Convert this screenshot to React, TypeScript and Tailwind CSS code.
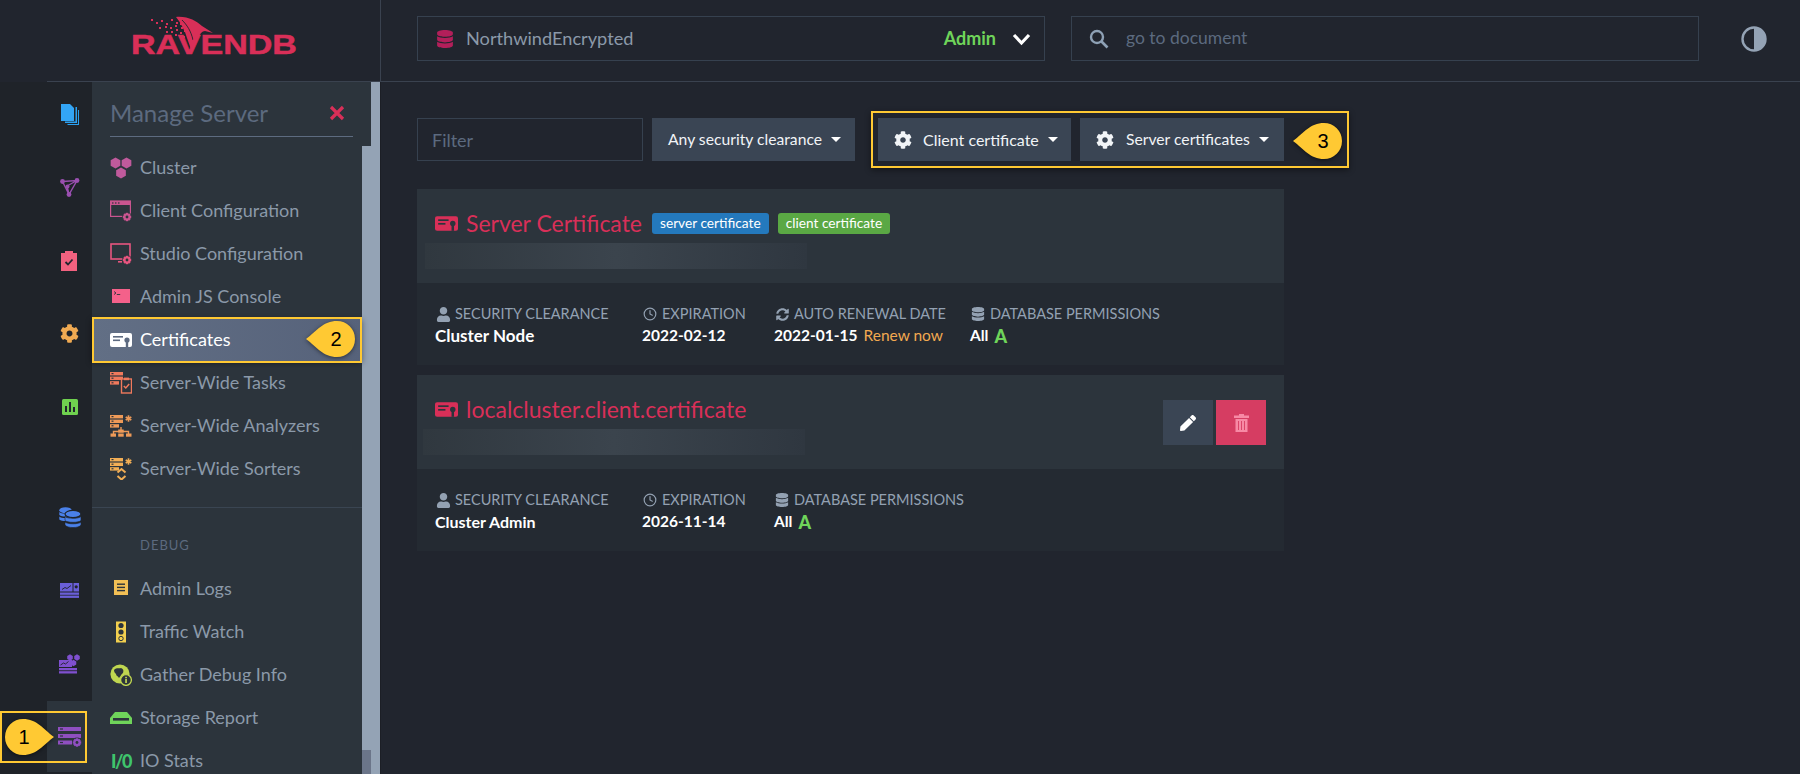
import type { ReactNode } from 'react';
import { FaCog, FaDatabase, FaPen, FaSyncAlt, FaUser } from 'react-icons/fa';
import { FiClock } from 'react-icons/fi';

function Hex({ x, y, r }: { x: number; y: number; r: number }) {
  const h = r * 0.866;
  return <polygon points={`${x},${y - r} ${x + h},${y - r / 2} ${x + h},${y + r / 2} ${x},${y + r} ${x - h},${y + r / 2} ${x - h},${y - r / 2}`} />;
}

function Gear({ x, y, r, bg = '#2c343c' }: { x: number; y: number; r: number; bg?: string }) {
  const teeth = [0, 45, 90, 135];
  return (
    <g>
      <circle cx={x} cy={y} r={r + 1.5} fill={bg} />
      {teeth.map((a) => (
        <rect key={a} x={x - 1.2} y={y - r - 0.8} width={2.4} height={2 * r + 1.6} transform={`rotate(${a} ${x} ${y})`} />
      ))}
      <circle cx={x} cy={y} r={r} />
      <circle cx={x} cy={y} r={r * 0.42} fill={bg} />
    </g>
  );
}

function Ico({ w = 22, h = 22, color, children }: { w?: number; h?: number; color: string; children: ReactNode }) {
  return (
    <svg width={w} height={h} viewBox={`0 0 ${w} ${h}`} fill={color} className="shrink-0">
      {children}
    </svg>
  );
}

function CertIcon({ color, hole = '#2c343c', w = 22, h = 16 }: { color: string; hole?: string; w?: number; h?: number }) {
  return (
    <svg width={w} height={h} viewBox="0 0 22 16" className="shrink-0">
      <rect x="0" y="1" width="22" height="14" rx="2" fill={color} />
      <rect x="3" y="4" width="10" height="1.6" fill={hole} />
      <rect x="3" y="7.5" width="7" height="1.6" fill={hole} />
      <circle cx="17" cy="8" r="2.6" fill={hole} />
      <rect x="15.8" y="10" width="2.4" height="5" fill={hole} />
    </svg>
  );
}

function ServerStack({ c, y = 0 }: { c: string; y?: number }) {
  return (
    <g fill={c}>
      <rect x="0" y={y} width="13" height="3.4" />
      <rect x="0" y={y + 4.6} width="13" height="3.4" />
      <rect x="0" y={y + 9.2} width="9" height="3.4" />
      <rect x="1.5" y={y + 1} width="2" height="1.2" fill="#2c343c" />
      <rect x="1.5" y={y + 5.6} width="2" height="1.2" fill="#2c343c" />
      <rect x="1.5" y={y + 10.2} width="2" height="1.2" fill="#2c343c" />
    </g>
  );
}

const Asterisk = ({ x, y, c }: { x: number; y: number; c: string }) => (
  <g stroke={c} strokeWidth="1.7">
    <line x1={x} y1={y - 3.2} x2={x} y2={y + 3.2} />
    <line x1={x - 2.8} y1={y - 1.6} x2={x + 2.8} y2={y + 1.6} />
    <line x1={x - 2.8} y1={y + 1.6} x2={x + 2.8} y2={y - 1.6} />
  </g>
);

const serverItems: { label: string; icon: ReactNode; active?: boolean }[] = [
  {
    label: 'Cluster',
    icon: (
      <Ico color="#c05a9c">
        <Hex x={5.5} y={6} r={5.6} />
        <Hex x={16.5} y={6} r={5.6} />
        <Hex x={11} y={16} r={5.6} />
      </Ico>
    ),
  },
  {
    label: 'Client Configuration',
    icon: (
      <Ico color="#c9558f">
        <rect x="0.6" y="1" width="19.8" height="15.4" fill="none" stroke="#c9558f" strokeWidth="1.2" />
        <rect x="0.6" y="1" width="19.8" height="4" />
        <rect x="2" y="2.4" width="1.5" height="1.2" fill="#2c343c" />
        <rect x="5" y="2.4" width="1.5" height="1.2" fill="#2c343c" />
        <rect x="8" y="2.4" width="1.5" height="1.2" fill="#2c343c" />
        <Gear x={17} y={17} r={3.4} />
      </Ico>
    ),
  },
  {
    label: 'Studio Configuration',
    icon: (
      <Ico color="#e8557f">
        <rect x="1" y="1" width="19" height="15" fill="none" stroke="#e8557f" strokeWidth="1.6" />
        <rect x="8" y="18" width="4" height="1.6" />
        <Gear x={17} y={17} r={3.4} />
      </Ico>
    ),
  },
  {
    label: 'Admin JS Console',
    icon: (
      <Ico color="#f4618a">
        <rect x="2" y="3" width="18" height="14" />
        <path d="M4 5.5l2 1.5-2 1.5" fill="none" stroke="#2c343c" strokeWidth="0.9" />
        <rect x="6.8" y="8" width="3.4" height="0.9" fill="#2c343c" />
      </Ico>
    ),
  },
  { label: 'Certificates', active: true, icon: <CertIcon color="#ffffff" hole="#5d6a80" /> },
  {
    label: 'Server-Wide Tasks',
    icon: (
      <Ico color="#f0795c">
        <ServerStack c="#f0795c" />
        <rect x="11.5" y="7" width="10" height="14" fill="#2c343c" stroke="#f0795c" strokeWidth="1.4" />
        <rect x="14" y="5.6" width="5" height="2.6" />
        <path d="M13.8 14l2 2 3.4-4" fill="none" stroke="#f0795c" strokeWidth="1.5" />
      </Ico>
    ),
  },
  {
    label: 'Server-Wide Analyzers',
    icon: (
      <Ico color="#ee9a58">
        <ServerStack c="#ee9a58" />
        <Asterisk x={18.5} y={3.5} c="#ee9a58" />
        <path d="M11 12v4M3.5 20v-3.5h15V20" fill="none" stroke="#ee9a58" strokeWidth="1.4" />
        <rect x="0.5" y="18.5" width="5.5" height="3.2" />
        <rect x="8.2" y="14.5" width="5.5" height="3.2" />
        <rect x="8.2" y="18.5" width="5.5" height="3.2" />
        <rect x="16" y="18.5" width="5.5" height="3.2" />
      </Ico>
    ),
  },
  {
    label: 'Server-Wide Sorters',
    icon: (
      <Ico color="#f2ae55">
        <ServerStack c="#f2ae55" />
        <Asterisk x={18.5} y={3.5} c="#f2ae55" />
        <path d="M7.5 14.5l4-3.5 4 3.5M7.5 18l4 3.5 4-3.5" fill="none" stroke="#f2ae55" strokeWidth="2" />
      </Ico>
    ),
  },
];

const debugItems: { label: string; icon: ReactNode }[] = [
  {
    label: 'Admin Logs',
    icon: (
      <Ico color="#f2bf55">
        <rect x="4" y="2" width="14" height="15" />
        <rect x="7" y="5.5" width="8" height="1.4" fill="#2c343c" />
        <rect x="7" y="8.7" width="8" height="1.4" fill="#2c343c" />
        <rect x="7" y="11.9" width="8" height="1.4" fill="#2c343c" />
      </Ico>
    ),
  },
  {
    label: 'Traffic Watch',
    icon: (
      <Ico color="#f2cf4f">
        <rect x="6" y="0.5" width="10" height="21" />
        <circle cx="11" cy="4.5" r="2.6" fill="#2c343c" />
        <circle cx="11" cy="11" r="2.6" fill="#2c343c" />
        <circle cx="11" cy="17.5" r="2.2" fill="none" stroke="#2c343c" strokeWidth="1" />
      </Ico>
    ),
  },
  {
    label: 'Gather Debug Info',
    icon: (
      <Ico color="#bfd650">
        <circle cx="10" cy="10" r="9.6" />
        <path d="M4 6c3-3 5-1 7-2 2 1 3 2 2 5-2 1-2 3-4 5-1-2-3-2-3-4-1-1-2-2-2-4z" fill="#2c343c" />
        <circle cx="16" cy="16" r="5.4" fill="#2c343c" stroke="#bfd650" strokeWidth="1.3" />
        <rect x="15.2" y="15" width="1.7" height="4" />
        <rect x="15.2" y="12.8" width="1.7" height="1.5" />
      </Ico>
    ),
  },
  {
    label: 'Storage Report',
    icon: (
      <Ico color="#6fd45a">
        <path d="M5 5h12l5 6v6H0v-6z" />
        <rect x="3" y="11" width="16" height="2.6" fill="#2c343c" />
      </Ico>
    ),
  },
  {
    label: 'IO Stats',
    icon: <span className="w-[22px] text-center text-[18px] font-black leading-none tracking-[-1.5px] text-[#3fc46c]">I/0</span>,
  },
];

function MenuRow({ label, icon, active }: { label: string; icon: ReactNode; active?: boolean }) {
  return (
    <div
      className={
        active
          ? 'relative flex h-[43px] items-center gap-[8px] bg-linear-to-r from-[#626f85] to-[#56627a] pl-[18px] text-white shadow-[0_2px_6px_rgba(0,0,0,0.45)]'
          : 'flex h-[43px] items-center gap-[8px] pl-[18px] text-[#8b99a9]'
      }
    >
      <span className="flex w-[22px] justify-center">{icon}</span>
      <span className="text-[18px]">{label}</span>
      {active && (
        <>
          <span className="absolute inset-x-0 -inset-y-[1.5px] border-2 border-[#ffc933]" />
          <Callout n={2} dir="left" className="right-[7px] top-[3px]" />
        </>
      )}
    </div>
  );
}

function Callout({ n, dir, className }: { n: number; dir: 'left' | 'right'; className: string }) {
  const d = dir === 'right' ? 'M49 18C38 26 32 36 18 36A18 18 0 0 1 18 0C32 0 38 10 49 18Z' : 'M0 18C11 10 17 0 31 0A18 18 0 0 1 31 36C17 36 11 26 0 18Z';
  return (
    <div className={`absolute h-[36px] w-[49px] ${className}`}>
      <svg width="49" height="36" viewBox="0 0 49 36" className="absolute inset-0 drop-shadow-[0_1px_2px_rgba(0,0,0,0.5)]">
        <path d={d} fill="#ffc933" />
      </svg>
      <span
        className={`absolute top-0 flex h-[36px] w-[36px] items-center justify-center font-[family-name:'Liberation_Sans',sans-serif] text-[20px] text-black ${dir === 'right' ? 'left-[1px]' : 'right-[1px]'}`}
      >
        {n}
      </span>
    </div>
  );
}

function Logo() {
  const dots = [
    [21, 3], [26, 6], [31, 4], [36, 7], [41, 3], [46, 6], [29, 11], [35, 10], [40, 11], [45, 9], [50, 7], [36, 15], [41, 15], [46, 13], [51, 11], [45, 18], [50, 16], [54, 14], [53, 20],
  ];
  return (
    <svg width="168" height="46" viewBox="0 0 168 46" aria-label="RavenDB">
      <g fill="#d92f58">
        {dots.map(([x, y]) => (
          <rect key={`${x}-${y}`} x={x} y={y} width="2" height="2" />
        ))}
        <path d="M46 1C58 0 66 5 72 10L83 17 75 15C72 15 70 18 68 22L62 36 57 22C55 15 51 7 46 1Z" />
        <path d="M52 4C57 9 61 15 63 24" fill="none" stroke="#21252e" strokeWidth="0.9" />
      </g>
      <text x="1" y="38" fontFamily="'Liberation Sans', sans-serif" fontWeight="700" fontSize="28" fill="#d92f58" stroke="#d92f58" strokeWidth="0.5" textLength="166" lengthAdjust="spacingAndGlyphs">
        RAVENDB
      </text>
    </svg>
  );
}

function Rail() {
  const top = [
    <Ico key="docs" color="#2ba0f0" w={18} h={21}>
      <path d="M14.5 3H16v16H4v-1.5h10.5zM17 6h1v15H6.5v-1H17z" />
      <path d="M0 0h9L13 4v13H0z" fill="#33a5f5" />
    </Ico>,
    <Ico key="graph" color="#9a4fb0" w={20} h={20}>
      <path d="M2.5 3.5L17 2.5 9 16.5zM7 8l2 8.5M7 8L17 2.5" fill="none" stroke="#9a4fb0" strokeWidth="1.4" />
      <circle cx="2.5" cy="3.5" r="2.4" />
      <circle cx="17" cy="2.5" r="2.4" />
      <circle cx="9" cy="16.5" r="2.4" />
      <circle cx="7.5" cy="8.5" r="2" />
    </Ico>,
    <Ico key="tasks" color="#f2617f" w={18} h={20}>
      <rect x="0" y="2" width="16" height="18" />
      <rect x="4" y="0" width="8" height="4" />
      <path d="M4.5 11l2.5 2.5 4.5-5" fill="none" stroke="#21252e" strokeWidth="1.8" />
    </Ico>,
    <FaCog key="gear" size={19} color="#f0aa52" />,
    <Ico key="chart" color="#6fd14f" w={16} h={16}>
      <rect x="0" y="0" width="16" height="16" rx="1.5" />
      <rect x="3" y="7" width="2" height="6" fill="#21252e" />
      <rect x="7" y="3" width="2" height="10" fill="#21252e" />
      <rect x="11" y="8" width="2" height="5" fill="#21252e" />
    </Ico>,
  ];
  return (
    <div className="-mt-[3px] flex w-[45px] shrink-0 flex-col">
      <div className="flex flex-col gap-[2px]">
        {top.map((icon, i) => (
          <div key={i} className="flex h-[71px] items-center justify-center">
            {icon}
          </div>
        ))}
      </div>
      <div className="mt-[40px] flex flex-col gap-[2px]">
        <div className="flex h-[71px] items-center justify-center">
          <Ico color="#4a80e8" w={22} h={21}>
            <ellipse cx="6.5" cy="3.2" rx="6.2" ry="3" />
            <path d="M0.3 5c2 2 10 2 12.4 0v3c-2 2-10 2-12.4 0zM0.3 9.5c2 2 10 2 12.4 0v3c-2 2-10 2-12.4 0z" />
            <ellipse cx="14" cy="7" rx="8" ry="3.6" stroke="#1f2329" strokeWidth="1.2" />
            <path d="M6 9.5c2 2.4 14 2.4 16 0v4c-2 2.4-14 2.4-16 0z" stroke="#1f2329" strokeWidth="0.6" />
            <path d="M6 15c2 2.4 14 2.4 16 0v3c-2 3.4-14 3.4-16 0z" stroke="#1f2329" strokeWidth="0.6" />
          </Ico>
        </div>
        <div className="flex h-[71px] items-center justify-center">
          <Ico color="#6a5fd8" w={19} h={15}>
            <rect x="0" y="0" width="12.5" height="8.5" />
            <rect x="13.5" y="0" width="5.5" height="8.5" />
            <path d="M2 6.5l3-2 2 1 4-3" fill="none" stroke="#1f2329" strokeWidth="0.9" />
            <circle cx="16.2" cy="3.8" r="1.6" fill="#1f2329" />
            <rect x="0" y="9.5" width="19" height="2.3" />
            <rect x="0" y="12.6" width="19" height="2.3" />
          </Ico>
        </div>
        <div className="flex h-[71px] items-center justify-center">
          <Ico color="#7f50cf" w={22} h={20}>
            <rect x="0" y="6" width="13" height="7" />
            <path d="M1.5 11l3-2 2 1 3-2.5" fill="none" stroke="#1f2329" strokeWidth="0.9" />
            <rect x="0" y="14" width="18" height="2.3" />
            <rect x="0" y="17.2" width="18" height="2.3" />
            <Hex x={11} y={3.5} r={3.2} />
            <Hex x={18} y={3.5} r={3.2} />
            <Hex x={14.5} y={9} r={3.2} />
          </Ico>
        </div>
        <div className="flex h-[71px] items-center justify-center bg-[#2c343c]">
          <Ico color="#8f4fc0" w={24} h={21}>
            <rect x="0" y="1" width="23" height="4" />
            <rect x="0" y="8" width="23" height="4" />
            <rect x="0" y="14.5" width="14" height="4" />
            <rect x="2" y="2.4" width="3" height="1.2" fill="#2c343c" />
            <rect x="2" y="9.4" width="3" height="1.2" fill="#2c343c" />
            <rect x="2" y="15.9" width="3" height="1.2" fill="#2c343c" />
            <Gear x={19} y={16.5} r={3.4} />
          </Ico>
        </div>
      </div>
    </div>
  );
}

function ManagePanel() {
  return (
    <div className="flex w-[279px] shrink-0 flex-col bg-[#2c343c]">
      <div className="h-[64px] shrink-0 pl-[18px] pr-[18px]">
        <div className="flex h-[55px] items-center justify-between border-b border-[#5d6b80] pt-[8px]">
          <span className="text-[24px] text-[#5c6a7f]">Manage Server</span>
          <svg width="16" height="16" viewBox="0 0 16 16" className="mr-[8px]">
            <path d="M2 2l12 12M14 2L2 14" stroke="#d92f58" strokeWidth="3.2" />
          </svg>
        </div>
      </div>
      <div className="flex min-h-0 flex-1">
        <div className="w-[270px] shrink-0">
          {serverItems.map((item) => (
            <MenuRow key={item.label} {...item} />
          ))}
          <div className="mt-[17px] h-px bg-[#3a4552]" />
          <div className="flex h-[59px] items-end pb-[12px] pl-[48px] text-[13px] tracking-[1px] text-[#5c6a7f]">DEBUG</div>
          {debugItems.map((item) => (
            <MenuRow key={item.label} {...item} />
          ))}
        </div>
        <div className="flex w-[9px] shrink-0 flex-col">
          <div className="h-[604px] shrink-0 bg-[#94a3b5]" />
          <div className="flex-1 bg-[#6b7589]" />
        </div>
      </div>
    </div>
  );
}

function ToolbarButton({ children, className = '' }: { children: ReactNode; className?: string }) {
  return (
    <button className={`flex h-[43px] items-center bg-[#3a4554] text-[15.7px] text-[#f1f4f7] ${className}`}>
      {children}
      <span className="ml-[9px] h-0 w-0 border-x-[5px] border-t-[5px] border-x-transparent border-t-white" />
    </button>
  );
}

function Metric({ icon, label, width, children }: { icon: ReactNode; label: string; width: string; children: ReactNode }) {
  return (
    <div className={width}>
      <div className="flex h-[20px] items-center gap-[4px] text-[14.5px] text-[#93a1b2]">
        <span className="flex w-[16px] justify-center">{icon}</span>
        {label}
      </div>
      <div className="mt-[2px] flex h-[20px] items-center text-[15.5px] font-bold text-white">{children}</div>
    </div>
  );
}

const DbPerm = () => (
  <>
    All <span className="ml-[6px] text-[18px] font-black text-[#6fd45a]">A</span>
  </>
);

function CertCard({ title, badges, actions, children, blurOffset }: { title: string; badges?: boolean; actions?: boolean; children: ReactNode; blurOffset: string }) {
  return (
    <div className="w-[867px]">
      <div className="relative h-[94px] bg-[#2c343c]">
        <div className="flex items-center pl-[18px] pt-[19px]">
          <CertIcon color="#d92f58" w={23} h={17} />
          <span className="ml-[8px] text-[23px] leading-[30px] text-[#d92f58]">{title}</span>
          {badges && (
            <>
              <span className="ml-[10px] flex h-[21px] items-center rounded-[3px] bg-[#2479bd] px-[8px] text-[13.7px] text-white">server certificate</span>
              <span className="ml-[9px] flex h-[21px] items-center rounded-[3px] bg-[#5aa844] px-[8px] text-[13.7px] text-white">client certificate</span>
            </>
          )}
        </div>
        <div className={`mt-[5px] h-[26px] w-[382px] bg-linear-to-r from-[#30383f] via-[#3b444d] to-[#2f3740] ${blurOffset}`} />
        {actions && (
          <div className="absolute right-[18px] top-[25px] flex gap-[3px]">
            <button className="flex h-[45px] w-[50px] items-center justify-center bg-[#3a4554]">
              <FaPen size={16} color="#ffffff" />
            </button>
            <button className="flex h-[45px] w-[50px] items-center justify-center bg-[#d63d62]">
              <svg width="15" height="18" viewBox="0 0 15 18">
                <path d="M5 0h5v1.5h5V4H0V1.5h5zM1.5 5h12v13h-12z" fill="#f78aa5" />
                <path d="M4.5 7v9M7.5 7v9M10.5 7v9" stroke="#d63d62" strokeWidth="0.9" />
              </svg>
            </button>
          </div>
        )}
      </div>
      <div className="flex h-[82px] bg-[#242a32] pl-[18px] pt-[21px]">{children}</div>
    </div>
  );
}

export default function App() {
  return (
    <div className="flex h-screen flex-col overflow-hidden bg-[#21252e] font-[family-name:Lato,sans-serif]">
      <header className="flex h-[82px] shrink-0">
        <div className="w-[47px] shrink-0" />
        <div className="flex flex-1 border-b border-[#3a424f]">
          <div className="flex w-[334px] shrink-0 items-start justify-center border-r border-[#3a424f] pt-[16px]">
            <Logo />
          </div>
          <div className="flex flex-1 items-start pl-[36px] pt-[16px]">
            <div className="flex h-[45px] w-[628px] items-center border border-[#36414f] pl-[18px] pr-[13px]">
              <FaDatabase size={18} color="#b31f5a" />
              <span className="ml-[12px] text-[18.2px] text-[#8b99a9]">NorthwindEncrypted</span>
              <span className="ml-auto text-[18px] font-bold text-[#6fd45a]">Admin</span>
              <svg width="19" height="14" viewBox="0 0 19 14" className="ml-[16px]">
                <path d="M2 3l7.5 8L17 3" fill="none" stroke="#ffffff" strokeWidth="3.2" />
              </svg>
            </div>
            <div className="ml-[26px] flex h-[45px] w-[628px] items-center border border-[#36414f] pl-[17px]">
              <svg width="20" height="20" viewBox="0 0 20 20" className="shrink-0">
                <circle cx="8" cy="8" r="6" fill="none" stroke="#8ea1b5" strokeWidth="2.4" />
                <path d="M12.5 12.5L18.5 18.5" stroke="#8ea1b5" strokeWidth="2.6" />
              </svg>
              <input placeholder="go to document" className="ml-[17px] flex-1 bg-transparent text-[17.5px] outline-none placeholder:text-[#5c6a7f]" />
            </div>
            <svg width="26" height="26" viewBox="0 0 26 26" className="ml-[42px] mt-[10px]">
              <circle cx="13" cy="13" r="11.5" fill="#21252e" stroke="#94a3b5" strokeWidth="2.4" />
              <path d="M13 1.5a11.5 11.5 0 0 1 0 23z" fill="#94a3b5" />
            </svg>
          </div>
        </div>
      </header>
      <div className="flex min-h-0 flex-1">
        <div className="flex shrink-0 bg-[#1f2329]">
          <div className="w-[47px] shrink-0" />
          <Rail />
        </div>
        <ManagePanel />
        <div className="w-[9px] shrink-0 bg-[#94a3b5]" />
        <main className="flex-1 border-l border-[#1c1f26] pl-[36px] pt-[36px]">
          <div className="flex items-start">
            <input placeholder="Filter" className="h-[43px] w-[226px] border border-[#36414f] bg-transparent px-[14px] text-[18px] outline-none placeholder:text-[#5c6a7f]" />
            <ToolbarButton className="ml-[9px] w-[203px] pl-[16px]">Any security clearance</ToolbarButton>
            <div className="relative ml-[23px] flex gap-[9px]">
              <span className="absolute -inset-y-[7px] -left-[7px] w-[478px] border-2 border-[#ffc933] shadow-[0_2px_6px_rgba(0,0,0,0.45)]" />
              <ToolbarButton className="relative w-[193px] pl-[16px]">
                <FaCog size={18} className="mr-[11px]" />
                <span className="text-[16px]">Client certificate</span>
              </ToolbarButton>
              <ToolbarButton className="relative w-[204px] pl-[16px]">
                <FaCog size={18} className="mr-[12px]" />
                Server certificates
              </ToolbarButton>
              <Callout n={3} dir="left" className="left-[415px] top-[5px]" />
            </div>
          </div>
          <div className="mt-[28px] flex flex-col gap-[10px]">
            <CertCard title="Server Certificate" badges blurOffset="ml-[8px]">
              <Metric icon={<FaUser size={15} color="#93a1b2" />} label="SECURITY CLEARANCE" width="w-[207px]">
                <span className="text-[17px]">Cluster Node</span>
              </Metric>
              <Metric icon={<FiClock size={14} color="#93a1b2" />} label="EXPIRATION" width="w-[132px]">
                2022-02-12
              </Metric>
              <Metric icon={<FaSyncAlt size={13} color="#93a1b2" />} label="AUTO RENEWAL DATE" width="w-[196px]">
                2022-01-15
                <span className="ml-[6px] font-normal text-[#f2a950]">Renew now</span>
              </Metric>
              <Metric icon={<FaDatabase size={14} color="#93a1b2" />} label="DATABASE PERMISSIONS" width="w-[220px]">
                <DbPerm />
              </Metric>
            </CertCard>
            <CertCard title="localcluster.client.certificate" actions blurOffset="ml-[6px]">
              <Metric icon={<FaUser size={15} color="#93a1b2" />} label="SECURITY CLEARANCE" width="w-[207px]">
                <span className="text-[16px]">Cluster Admin</span>
              </Metric>
              <Metric icon={<FiClock size={14} color="#93a1b2" />} label="EXPIRATION" width="w-[132px]">
                2026-11-14
              </Metric>
              <Metric icon={<FaDatabase size={14} color="#93a1b2" />} label="DATABASE PERMISSIONS" width="w-[220px]">
                <DbPerm />
              </Metric>
            </CertCard>
          </div>
        </main>
      </div>
      <div className="absolute left-0 top-[711px] h-[52px] w-[87px] border-2 border-[#ffc933]" />
      <Callout n={1} dir="right" className="left-[5px] top-[719px]" />
    </div>
  );
}
